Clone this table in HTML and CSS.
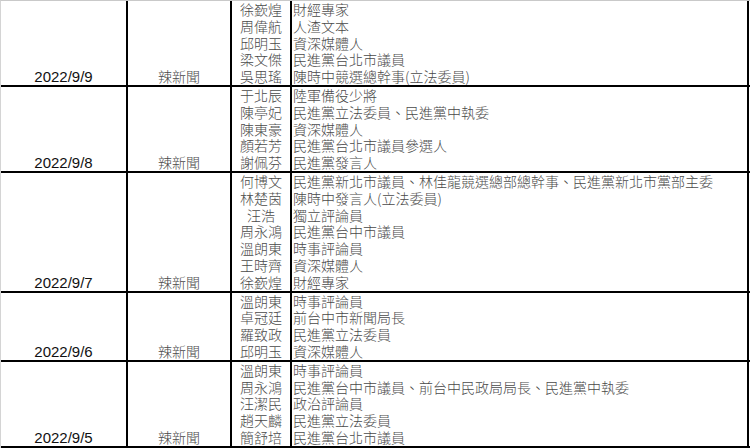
FILE: index.html
```html
<!DOCTYPE html>
<html lang="zh-Hant">
<head>
<meta charset="utf-8">
<title>辣新聞</title>
<link rel="stylesheet" href="styles.css">
</head>
<body>
<div class="sheet">
  <div class="row">
    <div class="cell date">2022/9/9</div>
    <div class="cell src">辣新聞</div>
    <div class="cell names"><div>徐嶔煌</div><div>周偉航</div><div>邱明玉</div><div>梁文傑</div><div>吳思瑤</div></div>
    <div class="cell roles"><div>財經專家</div><div>人渣文本</div><div>資深媒體人</div><div>民進黨台北市議員</div><div>陳時中競選總幹事(立法委員)</div></div>
  </div>
  <div class="row">
    <div class="cell date">2022/9/8</div>
    <div class="cell src">辣新聞</div>
    <div class="cell names"><div>于北辰</div><div>陳亭妃</div><div>陳東豪</div><div>顏若芳</div><div>謝佩芬</div></div>
    <div class="cell roles"><div>陸軍備役少將</div><div>民進黨立法委員、民進黨中執委</div><div>資深媒體人</div><div>民進黨台北市議員參選人</div><div>民進黨發言人</div></div>
  </div>
  <div class="row">
    <div class="cell date">2022/9/7</div>
    <div class="cell src">辣新聞</div>
    <div class="cell names"><div>何博文</div><div>林楚茵</div><div>汪浩</div><div>周永鴻</div><div>溫朗東</div><div>王時齊</div><div>徐嶔煌</div></div>
    <div class="cell roles"><div>民進黨新北市議員、林佳龍競選總部總幹事、民進黨新北市黨部主委</div><div>陳時中發言人(立法委員)</div><div>獨立評論員</div><div>民進黨台中市議員</div><div>時事評論員</div><div>資深媒體人</div><div>財經專家</div></div>
  </div>
  <div class="row">
    <div class="cell date">2022/9/6</div>
    <div class="cell src">辣新聞</div>
    <div class="cell names"><div>溫朗東</div><div>卓冠廷</div><div>羅致政</div><div>邱明玉</div></div>
    <div class="cell roles"><div>時事評論員</div><div>前台中市新聞局長</div><div>民進黨立法委員</div><div>資深媒體人</div></div>
  </div>
  <div class="row">
    <div class="cell date">2022/9/5</div>
    <div class="cell src">辣新聞</div>
    <div class="cell names"><div>溫朗東</div><div>周永鴻</div><div>汪潔民</div><div>趙天麟</div><div>簡舒培</div></div>
    <div class="cell roles"><div>時事評論員</div><div>民進黨台中市議員、前台中民政局局長、民進黨中執委</div><div>政治評論員</div><div>民進黨立法委員</div><div>民進黨台北市議員</div></div>
  </div>
</div>
</body>
</html>
```
FILE: styles.css
```css
html, body {
  margin: 0;
  padding: 0;
  background: #ffffff;
}
.sheet {
  width: 749px;
  border-top: 1px solid #c9c9c9;
  border-left: 1px solid #d4d4d4;
  font-family: "Noto Sans CJK TC", "Noto Sans CJK SC", sans-serif;
  font-size: 14px;
  line-height: 16.8px;
  color: #4a4a4a;
  font-weight: 300;
}
.row {
  display: grid;
  grid-template-columns: 127px 104px 60px 457px;
  border-bottom: 2px solid #000;
}
.cell {
  box-sizing: border-box;
  border-right: 2px solid #000;
  white-space: nowrap;
}
.date {
  display: flex;
  align-items: flex-end;
  justify-content: center;
  font-family: "Liberation Sans", Arial, sans-serif;
  font-size: 15px;
  font-weight: 400;
  color: #111;
  line-height: 16px;
}
.src {
  display: flex;
  align-items: flex-end;
  justify-content: center;
}
.names {
  text-align: center;
}
.roles {
  padding-left: 1px;
}
```
